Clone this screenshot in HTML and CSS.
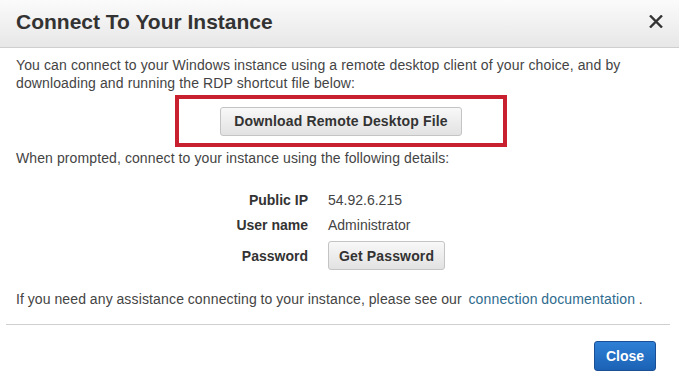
FILE: index.html
```html
<!DOCTYPE html>
<html>
<head>
<meta charset="utf-8">
<link rel="stylesheet" href="styles.css">
</head>
<body>
<div class="dialog">
  <div class="header">
    <h1 class="title">Connect To Your Instance</h1>
    <span class="close-x">
      <svg width="14" height="13" viewBox="0 0 14 13"><path d="M1 0.5 L13 12.5 M13 0.5 L1 12.5" stroke="#333" stroke-width="2.4" fill="none"/></svg>
    </span>
  </div>
  <div class="body">
    <p class="intro">You can connect to your Windows instance using a remote desktop client of your choice, and by downloading and running the RDP shortcut file below:</p>
    <div class="highlight-wrap">
      <div class="highlight">
        <button class="btn">Download Remote Desktop File</button>
      </div>
    </div>
    <p class="prompt">When prompted, connect to your instance using the following details:</p>
    <div class="details">
      <div class="label">Public IP</div><div class="value">54.92.6.215</div>
      <div class="label">User name</div><div class="value">Administrator</div>
      <div class="label">Password</div><div class="value"><button class="btn">Get Password</button></div>
    </div>
    <p class="help">If you need any assistance connecting to your instance, please see our <a class="link" href="#">connection documentation</a> .</p>
  </div>
  <div class="footer">
    <button class="btn-primary">Close</button>
  </div>
</div>
</body>
</html>
```
FILE: styles.css
```css
html, body {
  margin: 0;
  padding: 0;
  background: #fff;
}
body {
  font-family: "Liberation Sans", Arial, sans-serif;
  font-size: 14px;
  color: #444;
  width: 679px;
  height: 379px;
  overflow: hidden;
}
.dialog {
  display: flex;
  flex-direction: column;
}
.header {
  height: 47px;
  border-bottom: 1px solid #cfcfcf;
  background: linear-gradient(#fbfbfb, #e7e7e7);
  display: flex;
  align-items: center;
  justify-content: space-between;
  padding: 0 16px 0 16px;
}
.title {
  margin: 0;
  font-size: 21px;
  font-weight: bold;
  color: #333;
  line-height: 24px;
  padding-bottom: 4px;
}
.close-x {
  display: flex;
  padding-bottom: 5px;
}
.body {
  padding: 8px 16px 0 16px;
}
p {
  margin: 0;
  line-height: 18px;
}
.intro {
  width: 640px;
  letter-spacing: 0.12px;
}
.highlight-wrap {
  display: flex;
  justify-content: center;
  margin-top: 3px;
  padding-left: 3px;
}
.highlight {
  border: 4px solid #c8202f;
  width: 324px;
  height: 44px;
  display: flex;
  align-items: center;
  justify-content: center;
}
.btn {
  font-family: "Liberation Sans", Arial, sans-serif;
  font-size: 14px;
  font-weight: bold;
  color: #333;
  background: linear-gradient(#f8f8f8, #e2e2e2);
  border: 1px solid #c4c4c4;
  border-radius: 3px;
  height: 29px;
  padding: 0 13px;
  letter-spacing: 0.15px;
}
.prompt {
  margin-top: 2px;
  letter-spacing: 0.1px;
}
.details {
  display: grid;
  grid-template-columns: 292px auto;
  column-gap: 20px;
  row-gap: 7px;
  margin-top: 24px;
  align-items: center;
}
.label {
  text-align: right;
  font-weight: bold;
  color: #333;
  line-height: 18px;
}
.value {
  line-height: 18px;
}
.value .btn {
  padding: 0 10px;
}
.help {
  margin-top: 20px;
  letter-spacing: 0.15px;
  word-spacing: -0.4px;
}
.link {
  color: #2e6b8e;
  text-decoration: none;
  margin-left: 3px;
}
.footer {
  margin: 16px 9px 0 6px;
  border-top: 1px solid #cfcfcf;
  display: flex;
  justify-content: flex-end;
  padding: 16px 14px 0 0;
}
.btn-primary {
  font-family: "Liberation Sans", Arial, sans-serif;
  font-size: 14px;
  font-weight: bold;
  color: #fff;
  background: linear-gradient(#2f80d6, #1b62b5);
  border: 1px solid #1a4f95;
  border-radius: 3px;
  height: 30px;
  width: 62px;
  padding: 0;
}
```
